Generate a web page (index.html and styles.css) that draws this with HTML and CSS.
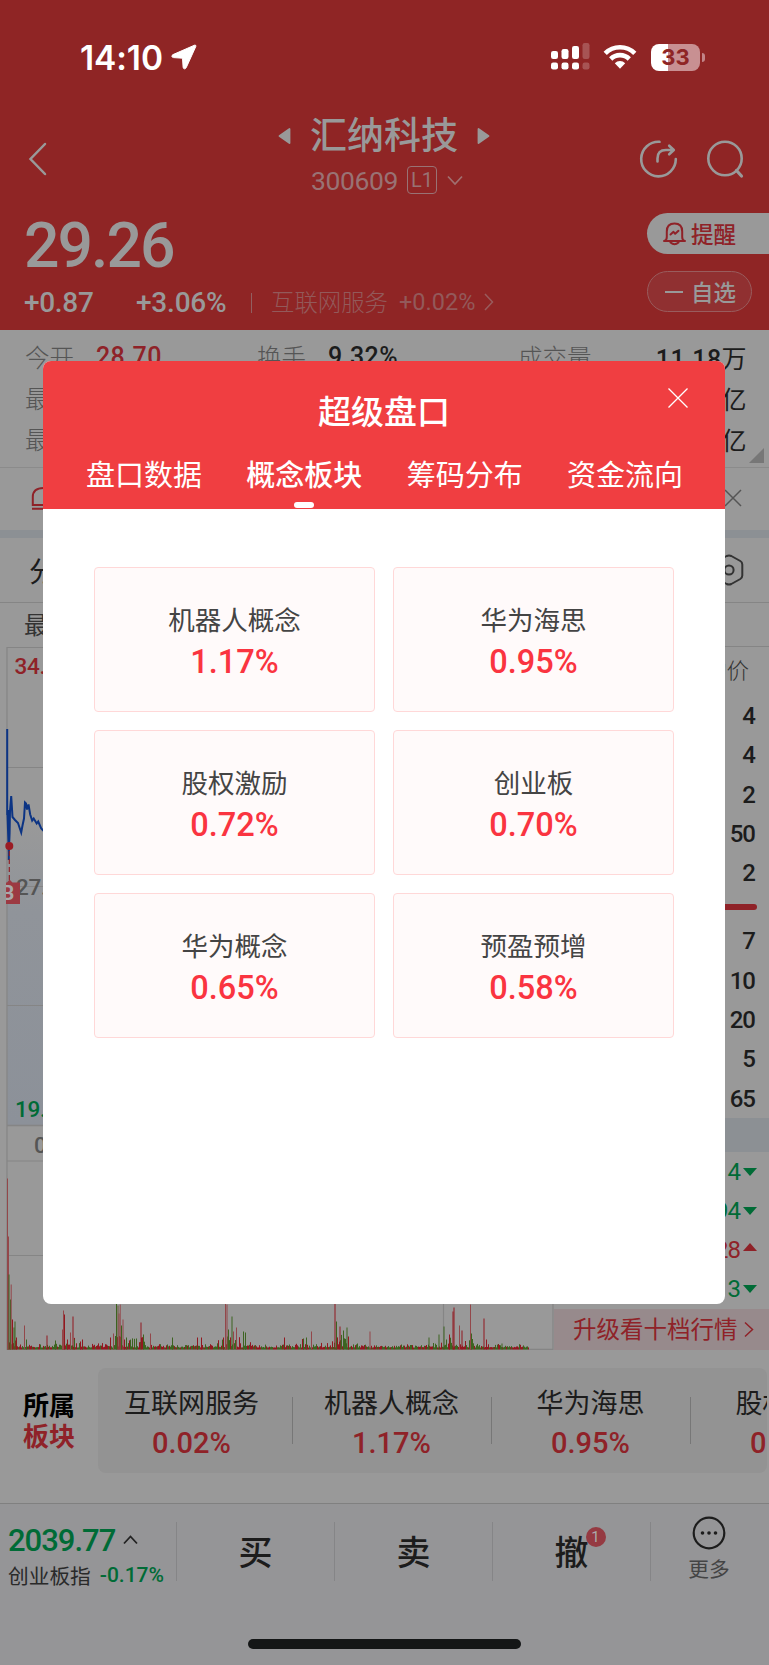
FILE: index.html
```html
<!DOCTYPE html>
<html lang="zh-CN">
<head>
<meta charset="utf-8">
<title>汇纳科技</title>
<link rel="stylesheet" href="styles.css">
</head>
<body>
<div class="screen">
  <header class="header">
    <div class="status">
      <span class="time">14:10</span>
      <svg class="loc" width="26" height="26" viewBox="0 0 26 26"><path d="M23.500 1.200 2 10.600c-1.700.8-1.500 2.900.5 3l9 .6.6 9c.2 2 2.300 2.200 3.100.5L24.800 2.500c.4-1-.4-1.700-1.300-1.300z" fill="#fff" stroke="#fff" stroke-width="1"/></svg>
      <svg class="signal" width="39" height="28" viewBox="0 0 39 28" fill="#fff"><rect x="0" y="8" width="7" height="8" rx="2.200"/><rect x="10.500" y="6" width="7" height="10" rx="2.200"/><rect x="21" y="3" width="7" height="13" rx="2.200"/><rect x="31.500" y="0" width="7" height="16" rx="2.200" opacity=".22"/><rect x="0" y="19.500" width="7" height="7" rx="2.200"/><rect x="10.500" y="19.500" width="7" height="7" rx="2.200"/><rect x="21" y="19.500" width="7" height="7" rx="2.200"/><rect x="31.500" y="19.500" width="7" height="7" rx="2.200" opacity=".22"/></svg>
      <svg class="wifi" width="34" height="26" viewBox="0 0 34 26" fill="none" stroke="#fff" stroke-width="4.600"><path d="M2.200 9.300a21 21 0 0 1 29.600 0"/><path d="M7.700 15a13.200 13.200 0 0 1 18.600 0"/><path d="M11.800 19.200a7.400 7.400 0 0 1 10.400 0L17 24.700z" fill="#fff" stroke="none"/></svg>
      <div class="battery"><span>33</span></div>
      <i class="nub"></i>
    </div>
    <div class="nav">
      <svg class="back" width="19" height="34" viewBox="0 0 19 34"><path d="M17 2 2.500 17 17 32" fill="none" stroke="#999" stroke-width="2.500" stroke-linecap="round"/></svg>
      <div class="stock">
        <div class="stock-name">
          <svg width="13" height="18" viewBox="0 0 13 18"><path d="M11.500 2v14L1.500 9z" fill="#999" stroke="#999" stroke-width="1.800" stroke-linejoin="round"/></svg>
          <span>汇纳科技</span>
          <svg width="13" height="18" viewBox="0 0 13 18"><path d="M1.500 2v14L11.500 9z" fill="#999" stroke="#999" stroke-width="1.800" stroke-linejoin="round"/></svg>
        </div>
        <div class="stock-code"><span class="num">300609</span><b class="lv">L1</b>
          <svg width="16" height="11" viewBox="0 0 16 11"><path d="m1 1.500 7 7.500 7-7.500" fill="none" stroke="#a07070" stroke-width="1.700"/></svg>
        </div>
      </div>
      <svg class="share" width="40" height="40" viewBox="0 0 40 40" fill="none" stroke="#999" stroke-width="2.600" stroke-linecap="round" stroke-linejoin="round"><path d="M20.500 2.800A17.300 17.300 0 1 0 36.800 20"/><path d="M18.500 22.500v-3q0-8.500 8.500-8.500h7M30.200 6.700l4.600 4.300-4.600 4.300"/></svg>
      <svg class="search" width="40" height="40" viewBox="0 0 40 40" fill="none" stroke="#999" stroke-width="2.600" stroke-linecap="round"><circle cx="19" cy="19.500" r="16.700"/><path d="m30.500 31.500 5 5.500" stroke-width="3.200"/></svg>
    </div>
    <div class="quote">
      <div class="quote-left">
        <div class="price num">29.26</div>
        <div class="delta num"><span class="d1">+0.87</span><span class="d2">+3.06%</span><i class="vbar"></i><span class="ind">互联网服务</span><span class="ind-pct">+0.02%</span>
          <svg width="10" height="18" viewBox="0 0 10 18"><path d="m1 1 7.500 8L1 17" fill="none" stroke="#995c5d" stroke-width="1.500"/></svg></div>
      </div>
      <div class="quote-right">
        <div class="pill alert"><svg width="23" height="24" viewBox="0 0 23 24" fill="none" stroke="#8f2228" stroke-width="2" stroke-linecap="round" stroke-linejoin="round"><path d="M1 19h21M1.500 19q2.300-1 2.300-4V9.500q0-7.900 7.700-7.900t7.700 7.900V15q0 3 2.300 4M7.500 20.500q4 3.500 8 0"/><path d="m7.500 12.500 3-2.700 1.700 2 3.300-3"/></svg><span>提醒</span></div>
        <div class="pill fav"><i></i><span>自选</span></div>
      </div>
    </div>
  </header>

  <section class="stats">
    <div class="stat-row"><span class="k">今开</span><span class="v red">28.70</span><span class="k">换手</span><span class="v">9.32%</span><span class="k">成交量</span><span class="v end">11.18<u>万</u></span></div>
    <div class="stat-row"><span class="k">最高</span><span class="v end"><u>亿</u></span></div>
    <div class="stat-row"><span class="k">最低</span><span class="v end"><u>亿</u></span></div>
    <svg class="corner" width="15" height="15"><path d="M15 0v15H0z" fill="#777"/></svg>
  </section>
  <section class="notice">
    <svg width="26" height="26" viewBox="0 0 26 26" fill="none" stroke="#8f2228" stroke-width="2"><path d="M1.800 19V11Q1.800 2 12.500 2t10.700 9v8zM1 22.800h24"/></svg>
    <svg width="18" height="18" viewBox="0 0 18 18" stroke="#555" stroke-width="1.500"><path d="m1 1 16 16M17 1 1 17"/></svg>
  </section>
  <section class="periods"><span>分时</span>
    <svg width="30" height="32" viewBox="0 0 30 32" fill="none" stroke="#333" stroke-width="2" stroke-linejoin="round"><path d="M12.700 2q2.300-1.200 4.600 0l9 5q2 1.200 2 3.500v11q0 2.300-2 3.500l-9 5q-2.300 1.200-4.600 0l-9-5q-2-1.200-2-3.500v-11q0-2.300 2-3.500z"/><circle cx="15" cy="16" r="4.600"/></svg>
  </section>
  <section class="latest">最新</section>

  <section class="market">
    <svg class="chart" id="chart" width="554" height="704" viewBox="0 646 554 704">
      <defs><linearGradient id="fade" x1="0" y1="0" x2="0" y2="1"><stop offset="0" stop-color="#999"/><stop offset=".3" stop-color="#90949a"/><stop offset="1" stop-color="#8c9199"/></linearGradient></defs>
      <path d="M7 820h546v305H7z" fill="url(#fade)"/>
      <g fill="none" stroke="#858585" stroke-width="1.200"><path d="M7 1350V647.500h546V1350"/><path d="M7 767.500h546M7 886.500h546M7 1005.500h546M7 1161h546M7 1255.500h546M443.500 1161v189"/><path d="M7 1125.500h546M7 1349.500h546" stroke-width="1.600"/></g>
      <path d="M7.200 729v86M8.800 810v50M7.500 815l1.300 38 .8-20 .4-22 1.200-15 1.300 21 2.500 3 3 3 2 6 1.200 3.500 1.300-7 1.500-7 1-16 1 1 1 6 1.500-5 1.700 10 2 6 1.500-2 3 5 1.500-2 3 7 3 3 3-4h6" fill="none" stroke="#0c3484" stroke-width="2"/>
      <path d="M9.300 851v30" stroke="#8f2228" stroke-width="1.200" stroke-dasharray="5 3"/>
      <circle cx="9.300" cy="846" r="4" fill="#9b1c24"/>
      <text class="c-label" x="16" y="895" fill="#555">27.66</text>
      <path d="M6 882.500h1l2.500-3 3 3H20V904H6z" fill="#9c3a42"/>
      <svg x="6" y="882" width="14" height="22"><text x="-4.500" y="18" class="c-buy">B</text></svg>
      <text class="c-label" x="14.500" y="674" fill="#8f2228">34.07</text>
      <text class="c-label" x="15" y="1117" fill="#006b36">19.87</text>
      <text class="c-label" x="34" y="1153" fill="#555">09:30</text>
      <g id="vol"></g>
    </svg>
    <div class="book">
      <div class="b-head">均价</div>
      <div class="b-row">4</div><div class="b-row">4</div><div class="b-row">2</div><div class="b-row">50</div><div class="b-row">2</div>
      <div class="b-sep"></div>
      <div class="b-row">7</div><div class="b-row">10</div><div class="b-row">20</div><div class="b-row">5</div><div class="b-row">65</div>
      <div class="b-band"></div>
      <div class="t-row down">4<i></i></div><div class="t-row down">94<i></i></div><div class="t-row up">28<i></i></div><div class="t-row down">3<i></i></div>
      <div class="upgrade"><span>升级看十档行情</span><svg width="10" height="17" viewBox="0 0 10 17"><path d="m1 1.500 7.500 7L1 15.500" fill="none" stroke="#8f2228" stroke-width="1.500"/></svg></div>
    </div>
  </section>

  <section class="boards">
    <div class="b-label"><span>所属</span><span class="red">板块</span></div>
    <div class="b-list">
      <div class="b-item"><span>互联网服务</span><b>0.02%</b></div>
      <div class="b-item"><span>机器人概念</span><b>1.17%</b></div>
      <div class="b-item"><span>华为海思</span><b>0.95%</b></div>
      <div class="b-item"><span>股权激励</span><b>0.72%</b></div>
    </div>
  </section>

  <footer class="footer">
    <div class="index">
      <div class="idx-top"><span>2039.77</span><svg width="15" height="10" viewBox="0 0 15 10"><path d="m1 8.500 6.500-7 6.500 7" fill="none" stroke="#222" stroke-width="1.800"/></svg></div>
      <div class="idx-bot"><span>创业板指</span><b>-0.17%</b></div>
    </div>
    <div class="act"><span>买</span></div>
    <div class="act"><span>卖</span></div>
    <div class="act"><span class="badge-host">撤<em>1</em></span></div>
    <div class="more"><svg width="34" height="34" viewBox="0 0 34 34"><circle cx="17" cy="17" r="15.300" fill="none" stroke="#1c1c1c" stroke-width="2.200"/><g fill="#1c1c1c"><circle cx="10.500" cy="17" r="1.800"/><circle cx="17" cy="17" r="1.800"/><circle cx="23.500" cy="17" r="1.800"/></g></svg><span>更多</span></div>
  </footer>
  <div class="home"></div>

  <div class="modal">
    <div class="m-head">
      <svg class="m-close" width="20" height="20" viewBox="0 0 20 20" stroke="#fff" stroke-width="1.300"><path d="m.5.5 19 19M19.500.5l-19 19"/></svg>
      <h2>超级盘口</h2>
      <div class="tabs"><span>盘口数据</span><span class="on">概念板块</span><span>筹码分布</span><span>资金流向</span></div>
    </div>
    <div class="cards">
      <div class="card"><span>机器人概念</span><b>1.17%</b></div>
      <div class="card"><span>华为海思</span><b>0.95%</b></div>
      <div class="card"><span>股权激励</span><b>0.72%</b></div>
      <div class="card"><span>创业板</span><b>0.70%</b></div>
      <div class="card"><span>华为概念</span><b>0.65%</b></div>
      <div class="card"><span>预盈预增</span><b>0.58%</b></div>
    </div>
  </div>
</div>
<script src="chart.js"></script>
</body>
</html>
```
FILE: styles.css
```css
* { box-sizing: border-box; }
body { margin: 0; font-family: Roboto, "Noto Sans CJK SC", sans-serif; color: #1c1c1c; }
.screen { position: relative; width: 769px; height: 1665px; overflow: hidden; background: #999; display: flex; flex-direction: column; }
.screen > * { flex: none; }
svg { display: block; flex: none; }
i, em { font-style: normal; }
u { text-decoration: none; font-weight: 400; }
.red { color: #8f2228; }

/* header */
.header { height: 330px; background: #8f2525; color: #999; }
.status { height: 114px; display: flex; align-items: center; padding-left: 80px; }
.time { width: 91px; padding-top: 3px; font: 600 33.500px/1 Inter, sans-serif; letter-spacing: -.1px; color: #fff; white-space: nowrap; }
.signal { margin-left: 354px; }
.wifi { margin-left: 13px; }
.battery { margin-left: 14px; width: 49px; height: 27px; border-radius: 8px; background: linear-gradient(90deg, #fff 17px, #c89092 17px); display: flex; align-items: center; justify-content: center; font: 700 22px/1 Inter, sans-serif; color: #8f2525; }
.nub { width: 3px; height: 9px; margin-left: 2px; border-radius: 0 4px 4px 0; background: #c28488; }
.nav { height: 93px; display: flex; }
.back { margin: 28px 0 0 28px; }
.stock { margin-left: 231px; width: 226px; }
.stock-name { display: flex; align-items: center; gap: 19px; height: 43px; white-space: nowrap; font-size: 37px; font-weight: 500; }
.stock-name span { width: 148px; line-height: 43px; padding-top: 2px; }
.stock-code { display: flex; align-items: center; height: 46px; padding-left: 33px; color: #997274; }
.stock-code .num { width: 96px; font-size: 26.500px; letter-spacing: -.4px; }
.lv { width: 30px; height: 28px; border: 1.500px solid #997274; border-radius: 4px; font: 400 20px/26px Roboto, sans-serif; text-align: center; margin-right: 10px; }
.share { margin: 25px 0 0 135px; }
.search { margin: 25px 0 0 27px; }
.quote { display: flex; justify-content: space-between; height: 123px; }
.price { height: 75px; padding: 6px 0 0 24px; font-size: 62.500px; line-height: 66px; font-weight: 500; letter-spacing: -2px; }
.delta { display: flex; align-items: center; height: 41px; font-size: 28px; white-space: nowrap; padding-left: 24px; }
.d1 { width: 112px; font-weight: 500; letter-spacing: -.3px; }
.d2 { width: 115px; font-weight: 500; letter-spacing: -.2px; }
.vbar { width: 1px; height: 20px; background: #925f60; }
.ind { margin-left: 19px; width: 128px; padding-bottom: 3px; font-size: 23.400px; color: #93595a; font-weight: 300; }
.ind-pct { width: 85px; font-size: 23.500px; letter-spacing: 0; color: #93595a; }
.delta .ind-pct { padding-bottom: 2px; }
.delta svg { margin-bottom: 2px; }
.quote-right { width: 122px; padding-top: 6px; }
.pill { height: 41px; border-radius: 21px; display: flex; align-items: center; font-size: 22.500px; font-weight: 500; }
.pill span { padding-bottom: 2px; }
.alert { background: #999; color: #8f2228; border-radius: 21px 0 0 21px; padding-left: 16px; gap: 5px; }
.fav { width: 105px; margin-top: 17px; border: 1px solid #995c5d; background: #903031; padding-left: 17px; gap: 8px; }
.fav i { width: 18px; height: 2px; background: #999; }

/* quote stats */
.stats { position: relative; height: 138px; padding-top: 6px; border-bottom: 1px solid #8b8b8b; }
.stat-row { height: 41px; display: flex; align-items: center; padding: 0 22px 0 25px; font-size: 24.500px; white-space: nowrap; }
.k { color: #555; font-weight: 300; }
.v { font-weight: 500; font-size: 25px; letter-spacing: .4px; }
.stat-row .k:nth-child(1) { width: 71px; }
.stat-row .v:nth-child(2) { width: 161px; }
.stat-row .k:nth-child(3) { width: 71px; }
.stat-row .v:nth-child(4) { width: 190px; }
.stat-row .end { margin-left: auto; }
.stat-row .end:nth-child(2) { width: auto; }
.corner { position: absolute; right: 5px; bottom: 4px; }
.notice { height: 70px; display: flex; justify-content: space-between; align-items: flex-start; padding: 18px 27px 0 31px; border-bottom: 8px solid #8c9094; }
.notice svg + svg { margin-top: 3px; }
.periods { height: 65px; display: flex; align-items: center; justify-content: space-between; padding: 0 25px 0 29px; font-size: 28px; border-bottom: 1px solid #858585; }
.latest { height: 43px; line-height: 46px; padding-left: 24px; font-size: 24px; color: #333; }

/* chart and order book */
.market { display: flex; height: 704px; }
.c-label { font: 500 22.500px Roboto, sans-serif; letter-spacing: -.3px; }
.c-buy { font: 700 20px Roboto, sans-serif; fill: #aaa; }
.book { width: 215px; border-top: 1px solid #858585; font-size: 24px; font-weight: 500; letter-spacing: -1px; text-align: right; }
.b-head { height: 50px; padding: 0 20px 0 0; line-height: 48px; font-size: 22.500px; font-weight: 300; letter-spacing: 0; color: #333; }
.b-row { height: 39.300px; line-height: 39.300px; padding-right: 14px; }
.b-sep { height: 6px; margin: 11px 12px 12px 12px; border-radius: 3px; background: #8f2228; }
.b-band { height: 34px; margin-top: -1px; background: #8c9094; }
.t-row { height: 39.200px; display: flex; align-items: center; justify-content: flex-end; gap: 3px; padding-right: 12px; font-weight: 400; }
.t-row i { border: 7px solid transparent; }
.down { color: #006b36; } .down i { border-top: 8px solid #006b36; border-bottom: 0; }
.up { color: #8f2228; } .up i { border-bottom: 8px solid #8f2228; border-top: 0; margin-top: -6px; }
.upgrade { height: 41px; display: flex; align-items: center; padding-left: 19px; gap: 6px; background: #978a8c; color: #8f2228; font-size: 23.500px; font-weight: 400; letter-spacing: 0; white-space: nowrap; }
.upgrade span { padding-bottom: 2px; }

/* related boards */
.boards { height: 153px; padding-top: 18px; display: flex; }
.b-label { width: 98px; height: 105px; padding: 23px 0 0 23px; font-size: 26px; line-height: 31px; font-weight: 700; color: #000; display: flex; flex-direction: column; }
.b-label .red { color: #8f2228; }
.b-list { width: 669px; height: 105px; overflow: hidden; display: flex; background: #939393; border-radius: 8px; margin-right: 2px; }
.b-item { flex: none; width: 199px; display: flex; flex-direction: column; align-items: center; position: relative; padding-right: 2px; padding-top: 16px; font-size: 27px; line-height: 40px; white-space: nowrap; }
.b-item:first-child { width: 195px; padding-right: 8px; }
.b-item::after { content: ""; position: absolute; right: 0; top: 29px; height: 47px; width: 1.500px; background: #777; }
.b-item b { font-weight: 500; font-size: 29px; line-height: 39px; letter-spacing: 0; color: #8f2228; }

/* bottom bar */
.footer { height: 124px; border-top: 1px solid #808080; background: #959597; display: flex; padding-top: 18px; }
.index { width: 177px; padding-left: 8px; height: 59px; border-right: 1px solid #858587; }
.idx-top { display: flex; align-items: center; gap: 8px; height: 36px; font-size: 31px; font-weight: 500; letter-spacing: -1px; color: #006b36; }
.idx-bot { display: flex; gap: 9px; align-items: center; height: 34px; font-size: 20.700px; white-space: nowrap; color: #2a2a2a; }
.idx-bot b { font-weight: 500; color: #006b36; font-size: 21px; }
.act { width: 158px; height: 59px; display: flex; align-items: center; justify-content: center; border-right: 1px solid #858587; font-size: 34px; font-weight: 500; }
.act span { position: relative; padding-bottom: 3px; }
.badge-host em { position: absolute; left: 31px; top: 1px; width: 20px; height: 20px; border-radius: 50%; background: #953a42; color: #aaa; font: 400 15px/20px Roboto, sans-serif; text-align: center; }
.more { flex: 1; display: flex; flex-direction: column; align-items: center; font-size: 20.700px; line-height: 32px; color: #444; margin-top: -6px; padding-right: 2px; }
.more span { margin-top: 4px; }
.home { background: #959597; padding: 12px 248px; flex: 1 !important; }
.home::before { content: ""; display: block; height: 10px; border-radius: 5px; background: #141616; }

/* dialog */
.modal { position: absolute; left: 43px; top: 361px; width: 682px; height: 943px; border-radius: 8px; overflow: hidden; background: #fff; }
.m-head { position: relative; height: 148px; background: #f03e41; color: #fff; text-align: center; }
.m-close { position: absolute; right: 37px; top: 27px; }
.m-head h2 { margin: 0; padding-top: 29px; font-size: 33px; line-height: 46px; font-weight: 500; }
.tabs { display: flex; justify-content: space-between; padding: 17px 42px 0 43px; height: 73px; font-size: 29px; line-height: 46px; }
.tabs span { position: relative; white-space: nowrap; }
.tabs .on { font-weight: 500; }
.tabs .on::after { content: ""; position: absolute; left: 50%; bottom: 1px; width: 20px; height: 6px; margin-left: -10px; border-radius: 3px; background: #fff; }
.cards { display: grid; grid-template-columns: 281px 281px; grid-auto-rows: 145px; gap: 18px; padding: 58px 51px; }
.card { display: flex; flex-direction: column; align-items: center; padding-top: 33px; border: 1.500px solid #ffd8d8; border-radius: 4px; background: #fffafa; font-size: 26.500px; line-height: 40px; color: #444; }
.card b { font-size: 32.500px; font-weight: 500; line-height: 43px; color: #fa3440; }
```
FILE: chart.js
```js
// Volume histogram: [x, height, colour] spikes on top of low background trading.
var RED = '#921820', GREEN = '#3c6420', SOFT = '#93474a', OLIVE = '#6a5a38';
var BASE = 1349.5;
var spikes = [
  [7, 171, SOFT], [8, 113, SOFT], [8.5, 75, GREEN], [10, 50, GREEN], [10.7, 65, SOFT], [12, 30, RED], [13.5, 22, GREEN], [14.5, 28, GREEN],
  [16, 12, RED], [24, 24, SOFT], [26, 10, GREEN], [46.5, 14, RED], [55, 9, GREEN], [62, 20, SOFT], [63, 39, SOFT], [64, 35, RED],
  [67, 10, RED], [70, 17, SOFT], [72.5, 33, RED], [74, 10, GREEN], [80, 8, RED], [82, 10, RED], [110, 12, RED], [113, 16, SOFT],
  [116, 47, GREEN], [117.5, 44, OLIVE], [118.5, 36, SOFT], [119.7, 45, SOFT], [121, 24, GREEN], [122.5, 30, SOFT], [124, 10, RED],
  [126, 12, GREEN], [136, 11, GREEN], [140.5, 27, RED], [143, 15, GREEN], [150, 16, SOFT], [172, 12, GREEN], [197, 12, RED], [201, 12, RED],
  [223, 12, RED], [225, 46, SOFT], [226.5, 45, SOFT], [228, 20, GREEN], [231.5, 33, GREEN], [233, 18, SOFT], [236, 22, SOFT],
  [243, 18, GREEN], [245, 17, GREEN], [284, 12, RED], [303, 11, GREEN], [306, 12, GREEN], [311, 18, SOFT], [334.5, 46, RED],
  [336, 28, GREEN], [339.5, 23, RED], [343, 19, GREEN], [346.5, 22, GREEN], [348, 13, RED], [369.5, 18, SOFT], [428.5, 12, GREEN],
  [438.5, 15, GREEN], [443.5, 23, GREEN], [449, 15, RED], [452.5, 38, RED], [453.5, 42, RED], [459, 24, SOFT], [461.5, 19, RED],
  [470, 45, SOFT], [471, 16, GREEN], [483.5, 31, RED], [486, 10, RED], [501.5, 6, GREEN]
];
var humps = [[7, 22], [72, 10], [118, 20], [141, 12], [228, 22], [240, 10], [305, 9], [342, 18], [450, 16], [472, 6]];
var seed = 7;
function rnd() { seed = (seed * 16807) % 2147483647; return seed / 2147483647; }
var out = '';
function bar(x, h, c) {
  out += '<rect x="' + x + '" y="' + (BASE - h).toFixed(1) + '" width="1" height="' + h.toFixed(1) + '" fill="' + c + '"/>';
}
for (var x = 7; x < 529; x++) {
  var m = 4;
  humps.forEach(function (p) { m += p[1] * Math.exp(-Math.abs(x - p[0]) / 7); });
  bar(x, 2 + m * rnd() * rnd(), rnd() > 0.5 ? RED : GREEN);
}
spikes.forEach(function (s) { bar(s[0], s[1], s[2]); });
document.getElementById('vol').innerHTML = out;
```
